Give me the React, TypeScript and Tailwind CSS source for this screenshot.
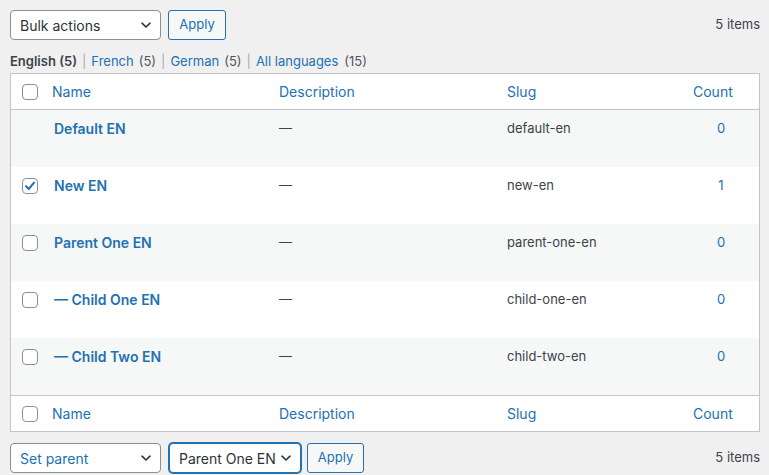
import React from 'react';

const rows = [
    { name: 'Default EN', slug: 'default-en', count: '0', check: null },
    { name: 'New EN', slug: 'new-en', count: '1', check: true },
    { name: 'Parent One EN', slug: 'parent-one-en', count: '0', check: false },
    { name: '— Child One EN', slug: 'child-one-en', count: '0', check: false },
    { name: '— Child Two EN', slug: 'child-two-en', count: '0', check: false },
];

const cols = 'grid grid-cols-[31px_227px_228px_186px_1fr]';

function Chevron() {
    return (
        <svg width="12" height="12" viewBox="0 0 12 12" className="shrink-0">
            <path d="M2 4.2 L6 8 L10 4.2" fill="none" stroke="#2c3338" strokeWidth="1.6" strokeLinecap="round" strokeLinejoin="round" />
        </svg>
    );
}

function Select({ label, width, focused, textClass }: { label: string; width: string; focused?: boolean; textClass?: string }) {
    return (
        <div
            className={`${width} h-[30px] flex items-center justify-between bg-white rounded-[4px] pl-[9px] pr-[8px] text-[14px] ${textClass ?? 'text-[#2c3338]'} ${
                focused ? 'border border-[#2271b1] shadow-[0_0_0_1px_#2271b1]' : 'border border-[#8c8f94]'
            }`}
        >
            <span>{label}</span>
            <Chevron />
        </div>
    );
}

function ApplyButton({ width }: { width: string }) {
    return (
        <div className={`${width} h-[30px] flex items-center justify-center rounded-[3px] border border-[#2271b1] bg-[#f6f7f7] text-[13px] text-[#2271b1]`}>
            Apply
        </div>
    );
}

function Checkbox({ checked }: { checked?: boolean }) {
    return (
        <div className="w-[16px] h-[16px] rounded-[4px] border border-[#8c8f94] bg-white flex items-center justify-center">
            {checked && (
                <svg width="14" height="14" viewBox="0 0 14 14">
                    <path d="M3 7.2 L5.8 10 L11 3.6" fill="none" stroke="#2271b1" strokeWidth="2" strokeLinecap="round" strokeLinejoin="round" />
                </svg>
            )}
        </div>
    );
}

function HeaderRow({ top }: { top?: boolean }) {
    return (
        <div className={`${cols} h-[36px] items-center bg-white text-[14px] text-[#2271b1] border-[#c3c4c7] ${top ? 'border-b' : 'border-t'}`}>
            <div className="pl-[11px] flex items-center">
                <Checkbox />
            </div>
            <div className="pl-[10px]">Name</div>
            <div className="pl-[10px]">Description</div>
            <div className="pl-[10px]">Slug</div>
            <div className="pl-[10px]">Count</div>
        </div>
    );
}

export default function App() {
    return (
        <div className="w-[769px] h-[475px] bg-[#f0f0f1] pl-[10px] pr-[9px] pt-[10px] font-['Inter',sans-serif] text-[13px] text-[#3c434a] overflow-hidden">
            <div className="flex items-center gap-[7px]">
                <Select label="Bulk actions" width="w-[151px]" />
                <ApplyButton width="w-[58px]" />
                <div className="ml-auto text-[13px] text-[#3c434a]">5 items</div>
            </div>

            <div className="mt-[13px] mb-[4px] flex items-center text-[13px] leading-[16px]">
                <span className="font-semibold text-[#3c434a]">English (5)</span>
                <span className="px-[5px] text-[#a7aaad]">|</span>
                <span className="text-[#2271b1]">French</span>
                <span className="ml-[5px] text-[#50575e]">(5)</span>
                <span className="px-[5px] text-[#a7aaad]">|</span>
                <span className="text-[#2271b1]">German</span>
                <span className="ml-[5px] text-[#50575e]">(5)</span>
                <span className="px-[5px] text-[#a7aaad]">|</span>
                <span className="text-[#2271b1]">All languages</span>
                <span className="ml-[6px] text-[#50575e]">(15)</span>
            </div>

            <div className="w-[750px] border border-[#c3c4c7] bg-white">
                <HeaderRow top />
                {rows.map((r, i) => (
                    <div key={r.slug} className={`${cols} h-[57px] ${i % 2 === 0 ? 'bg-[#f6f7f7]' : 'bg-white'}`}>
                        <div className="pl-[11px] pt-[11px]">{r.check !== null && <Checkbox checked={r.check} />}</div>
                        <div className="pl-[12px] pt-[8px] text-[14px] leading-[21px] font-semibold text-[#2271b1]">{r.name}</div>
                        <div className="pl-[10px] pt-[8px] leading-[21px] text-[#3c434a]">—</div>
                        <div className="pl-[10px] pt-[8px] leading-[21px] text-[#3c434a]">{r.slug}</div>
                        <div className="pt-[8px] leading-[21px] text-center text-[#2271b1]">{r.count}</div>
                    </div>
                ))}
                <HeaderRow />
            </div>

            <div className="mt-[11px] flex items-center">
                <Select label="Set parent" width="w-[151px]" textClass="text-[#2271b1]" />
                <div className="ml-[8px]">
                    <Select label="Parent One EN" width="w-[132px]" focused />
                </div>
                <div className="ml-[6px]">
                    <ApplyButton width="w-[57px]" />
                </div>
                <div className="ml-auto text-[13px] text-[#3c434a]">5 items</div>
            </div>
        </div>
    );
}
